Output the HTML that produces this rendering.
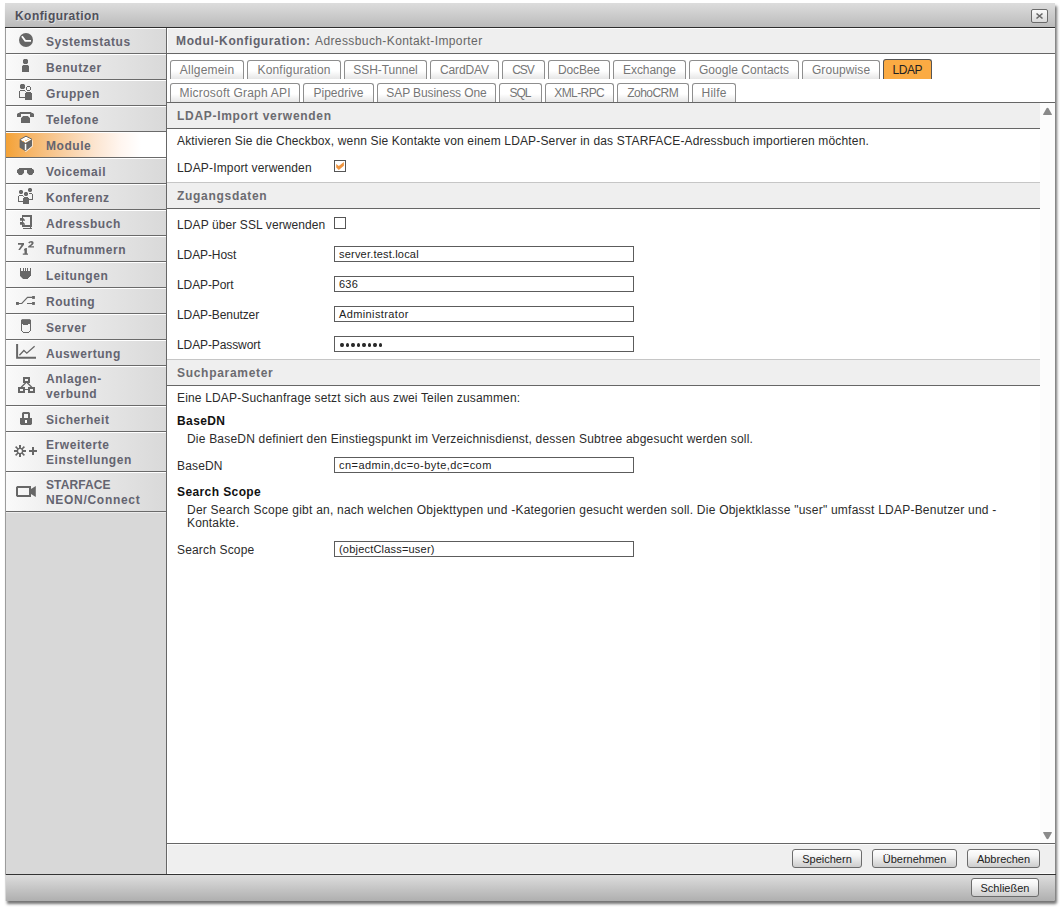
<!DOCTYPE html><html><head><meta charset="utf-8"><title>Konfiguration</title><style>
*{box-sizing:border-box}
html,body{margin:0;padding:0;background:#fff;width:1064px;height:910px;overflow:hidden;font-family:'Liberation Sans',sans-serif}
div{position:absolute}
.t{white-space:nowrap;line-height:20px}
.sb{font:bold 12px 'Liberation Sans',sans-serif;color:#646470;letter-spacing:.55px;line-height:20px}
.bd{font:12px 'Liberation Sans',sans-serif;color:#2b2b2b;letter-spacing:.16px;line-height:20px}
.sh{font:bold 12px 'Liberation Sans',sans-serif;color:#6b6b70;letter-spacing:.7px;line-height:20px}
.tb{height:19px;border:1px solid #8e8e8e;border-bottom:none;border-radius:3px 3px 0 0;background:linear-gradient(#fff 0,#fff 55%,#e6e6e6 100%)}
.tt{font:12px 'Liberation Sans',sans-serif;color:#767676;letter-spacing:.4px;text-align:center;line-height:20px;white-space:nowrap}
.in{height:16px;width:300px;border:1px solid #5c5c5c;background:#fff}
.it{font:11px 'Liberation Sans',sans-serif;color:#222;white-space:nowrap;line-height:20px;letter-spacing:.2px}
.bt{height:19px;border:1px solid #6c6c6c;border-radius:3px;background:linear-gradient(#fefefe,#f4f4f4 35%,#cdcdcd)}
.btt{font:11px 'Liberation Sans',sans-serif;color:#222;white-space:nowrap;line-height:20px;text-align:center}
</style></head><body>
<div style="left:5px;top:3px;width:1050px;height:898px;background:#d8d8d8;box-shadow:2px 3px 3px rgba(0,0,0,.55);border-radius:1px 1px 2px 0"></div>
<div style="left:5px;top:3px;width:1050px;height:24px;background:linear-gradient(#dddddd,#bbbbbb)"></div>
<div style="left:5px;top:27px;width:1050px;height:1px;background:#2e2e2e"></div>
<div class="t" style="left:15px;top:6px;font:bold 12px 'Liberation Sans',sans-serif;line-height:20px;color:#50505a;letter-spacing:.45px;text-shadow:1px 1px 0 rgba(255,255,255,.45)">Konfiguration</div>
<div style="left:1031px;top:9px;width:17px;height:14px;border:1px solid #6a6a6a;border-radius:2px;background:linear-gradient(#fbfbfb,#d9d9d9)"></div>
<div style="left:5px;top:28px;width:1px;height:847px;background:#9c9c9c"></div>

<div style="left:6px;top:28px;width:160px;height:847px;background:#d8d8d8"></div>
<div style="left:166px;top:28px;width:1px;height:847px;background:#666"></div>
<div style="left:6px;top:28px;width:160px;height:26px;background:linear-gradient(90deg,#fafafa,#f0f0f0 40px,#d9d9d9);border-top:1px solid #fff;border-bottom:1px solid #6a6a6a"></div>
<div class="t sb" style="left:46px;top:32px">Systemstatus</div>
<div style="left:6px;top:54px;width:160px;height:26px;background:linear-gradient(90deg,#fafafa,#f0f0f0 40px,#d9d9d9);border-top:1px solid #fff;border-bottom:1px solid #6a6a6a"></div>
<div class="t sb" style="left:46px;top:58px">Benutzer</div>
<div style="left:6px;top:80px;width:160px;height:26px;background:linear-gradient(90deg,#fafafa,#f0f0f0 40px,#d9d9d9);border-top:1px solid #fff;border-bottom:1px solid #6a6a6a"></div>
<div class="t sb" style="left:46px;top:84px">Gruppen</div>
<div style="left:6px;top:106px;width:160px;height:26px;background:linear-gradient(90deg,#fafafa,#f0f0f0 40px,#d9d9d9);border-top:1px solid #fff;border-bottom:1px solid #6a6a6a"></div>
<div class="t sb" style="left:46px;top:110px">Telefone</div>
<div style="left:6px;top:132px;width:160px;height:26px;background:linear-gradient(90deg,#f4a236 0,#f6b66a 25px,#f8cc9c 55px,#fce6d2 90px,#fff6f0 115px,#fff 135px);border-top:1px solid #fff;border-bottom:1px solid #6a6a6a"></div>
<div class="t sb" style="left:46px;top:136px">Module</div>
<div style="left:6px;top:158px;width:160px;height:26px;background:linear-gradient(90deg,#fafafa,#f0f0f0 40px,#d9d9d9);border-top:1px solid #fff;border-bottom:1px solid #6a6a6a"></div>
<div class="t sb" style="left:46px;top:162px">Voicemail</div>
<div style="left:6px;top:184px;width:160px;height:26px;background:linear-gradient(90deg,#fafafa,#f0f0f0 40px,#d9d9d9);border-top:1px solid #fff;border-bottom:1px solid #6a6a6a"></div>
<div class="t sb" style="left:46px;top:188px">Konferenz</div>
<div style="left:6px;top:210px;width:160px;height:26px;background:linear-gradient(90deg,#fafafa,#f0f0f0 40px,#d9d9d9);border-top:1px solid #fff;border-bottom:1px solid #6a6a6a"></div>
<div class="t sb" style="left:46px;top:214px">Adressbuch</div>
<div style="left:6px;top:236px;width:160px;height:26px;background:linear-gradient(90deg,#fafafa,#f0f0f0 40px,#d9d9d9);border-top:1px solid #fff;border-bottom:1px solid #6a6a6a"></div>
<div class="t sb" style="left:46px;top:240px">Rufnummern</div>
<div style="left:6px;top:262px;width:160px;height:26px;background:linear-gradient(90deg,#fafafa,#f0f0f0 40px,#d9d9d9);border-top:1px solid #fff;border-bottom:1px solid #6a6a6a"></div>
<div class="t sb" style="left:46px;top:266px">Leitungen</div>
<div style="left:6px;top:288px;width:160px;height:26px;background:linear-gradient(90deg,#fafafa,#f0f0f0 40px,#d9d9d9);border-top:1px solid #fff;border-bottom:1px solid #6a6a6a"></div>
<div class="t sb" style="left:46px;top:292px">Routing</div>
<div style="left:6px;top:314px;width:160px;height:26px;background:linear-gradient(90deg,#fafafa,#f0f0f0 40px,#d9d9d9);border-top:1px solid #fff;border-bottom:1px solid #6a6a6a"></div>
<div class="t sb" style="left:46px;top:318px">Server</div>
<div style="left:6px;top:340px;width:160px;height:26px;background:linear-gradient(90deg,#fafafa,#f0f0f0 40px,#d9d9d9);border-top:1px solid #fff;border-bottom:1px solid #6a6a6a"></div>
<div class="t sb" style="left:46px;top:344px">Auswertung</div>
<div style="left:6px;top:366px;width:160px;height:40px;background:linear-gradient(90deg,#fafafa,#f0f0f0 40px,#d9d9d9);border-top:1px solid #fff;border-bottom:1px solid #6a6a6a"></div>
<div class="sb" style="left:46px;top:372px;line-height:15px;white-space:nowrap">Anlagen-<br>verbund</div>
<div style="left:6px;top:406px;width:160px;height:26px;background:linear-gradient(90deg,#fafafa,#f0f0f0 40px,#d9d9d9);border-top:1px solid #fff;border-bottom:1px solid #6a6a6a"></div>
<div class="t sb" style="left:46px;top:410px">Sicherheit</div>
<div style="left:6px;top:432px;width:160px;height:40px;background:linear-gradient(90deg,#fafafa,#f0f0f0 40px,#d9d9d9);border-top:1px solid #fff;border-bottom:1px solid #6a6a6a"></div>
<div class="sb" style="left:46px;top:438px;line-height:15px;white-space:nowrap">Erweiterte<br>Einstellungen</div>
<div style="left:6px;top:472px;width:160px;height:40px;background:linear-gradient(90deg,#fafafa,#f0f0f0 40px,#d9d9d9);border-top:1px solid #fff;border-bottom:1px solid #6a6a6a"></div>
<div class="sb" style="left:46px;top:478px;line-height:15px;white-space:nowrap"><span style='letter-spacing:.1px'>STARFACE</span><br><span style='letter-spacing:.7px'>NEON/Connect</span></div>
<div style="left:6px;top:512px;width:160px;height:1px;background:#ececec"></div>
<div style="left:167px;top:28px;width:888px;height:25px;background:#efefef;border-top:1px solid #fff;border-left:1px solid #fff"></div>
<div style="left:167px;top:53px;width:888px;height:1px;background:#666"></div>
<div class="t" style="left:176px;top:31px;font:bold 12px 'Liberation Sans',sans-serif;line-height:20px;color:#63636d;letter-spacing:.63px">Modul-Konfiguration:</div>
<div class="t" style="left:315px;top:31px;font:12px 'Liberation Sans',sans-serif;line-height:20px;color:#666;letter-spacing:.4px">Adressbuch-Kontakt-Importer</div>
<div style="left:167px;top:54px;width:888px;height:48px;background:#fff"></div>
<div style="left:167px;top:102px;width:888px;height:1px;background:#666"></div>
<div class="tb" style="left:170px;top:60px;width:74px"></div>
<div class="tt" style="left:170px;top:60px;width:74px;letter-spacing:0.2px;text-indent:0.2px">Allgemein</div>
<div class="tb" style="left:247px;top:60px;width:94px"></div>
<div class="tt" style="left:247px;top:60px;width:94px;letter-spacing:0.2px;text-indent:0.2px">Konfiguration</div>
<div class="tb" style="left:344px;top:60px;width:83px"></div>
<div class="tt" style="left:344px;top:60px;width:83px;letter-spacing:-0.05px;text-indent:-0.05px">SSH-Tunnel</div>
<div class="tb" style="left:430px;top:60px;width:69px"></div>
<div class="tt" style="left:430px;top:60px;width:69px;letter-spacing:-0.15px;text-indent:-0.15px">CardDAV</div>
<div class="tb" style="left:502px;top:60px;width:43px"></div>
<div class="tt" style="left:502px;top:60px;width:43px;letter-spacing:-1.0px;text-indent:-1.0px">CSV</div>
<div class="tb" style="left:548px;top:60px;width:62px"></div>
<div class="tt" style="left:548px;top:60px;width:62px;letter-spacing:-0.15px;text-indent:-0.15px">DocBee</div>
<div class="tb" style="left:613px;top:60px;width:73px"></div>
<div class="tt" style="left:613px;top:60px;width:73px;letter-spacing:-0.05px;text-indent:-0.05px">Exchange</div>
<div class="tb" style="left:689px;top:60px;width:110px"></div>
<div class="tt" style="left:689px;top:60px;width:110px;letter-spacing:0.05px;text-indent:0.05px">Google Contacts</div>
<div class="tb" style="left:802px;top:60px;width:78px"></div>
<div class="tt" style="left:802px;top:60px;width:78px;letter-spacing:0.1px;text-indent:0.1px">Groupwise</div>
<div style="left:883px;top:59px;width:49px;height:20px;border:1px solid #555;border-bottom:none;border-radius:3px 3px 0 0;background:#fbab43"></div>
<div class="tt" style="left:883px;top:60px;width:49px;color:#222;letter-spacing:-0.4px;text-indent:-0.4px">LDAP</div>
<div class="tb" style="left:170px;top:83px;width:130px"></div>
<div class="tt" style="left:170px;top:83px;width:130px;letter-spacing:0.2px;text-indent:0.2px">Microsoft Graph API</div>
<div class="tb" style="left:303px;top:83px;width:71px"></div>
<div class="tt" style="left:303px;top:83px;width:71px;letter-spacing:0px;text-indent:0px">Pipedrive</div>
<div class="tb" style="left:377px;top:83px;width:119px"></div>
<div class="tt" style="left:377px;top:83px;width:119px;letter-spacing:-0.1px;text-indent:-0.1px">SAP Business One</div>
<div class="tb" style="left:499px;top:83px;width:43px"></div>
<div class="tt" style="left:499px;top:83px;width:43px;letter-spacing:-1.1px;text-indent:-1.1px">SQL</div>
<div class="tb" style="left:545px;top:83px;width:69px"></div>
<div class="tt" style="left:545px;top:83px;width:69px;letter-spacing:-0.6px;text-indent:-0.6px">XML-RPC</div>
<div class="tb" style="left:617px;top:83px;width:72px"></div>
<div class="tt" style="left:617px;top:83px;width:72px;letter-spacing:-0.55px;text-indent:-0.55px">ZohoCRM</div>
<div class="tb" style="left:692px;top:83px;width:44px"></div>
<div class="tt" style="left:692px;top:83px;width:44px;letter-spacing:0.2px;text-indent:0.2px">Hilfe</div>
<div style="left:167px;top:103px;width:888px;height:740px;background:#fff"></div>
<div style="left:1040px;top:103px;width:15px;height:740px;background:#fcfcfc"></div>
<div style="left:167px;top:103px;width:873px;height:25px;background:#efefef"></div>
<div style="left:167px;top:128px;width:873px;height:1px;background:#666"></div>
<div class="t sh" style="left:177px;top:106px">LDAP-Import verwenden</div>
<div style="left:167px;top:182px;width:873px;height:1px;background:#c6c6c6"></div>
<div style="left:167px;top:183px;width:873px;height:25px;background:#efefef"></div>
<div style="left:167px;top:208px;width:873px;height:1px;background:#666"></div>
<div class="t sh" style="left:177px;top:186px">Zugangsdaten</div>
<div style="left:167px;top:359px;width:873px;height:1px;background:#c6c6c6"></div>
<div style="left:167px;top:360px;width:873px;height:25px;background:#efefef"></div>
<div style="left:167px;top:385px;width:873px;height:1px;background:#666"></div>
<div class="t sh" style="left:177px;top:363px">Suchparameter</div>
<div class="t bd" style="left:177px;top:131px;">Aktivieren Sie die Checkbox, wenn Sie Kontakte von einem LDAP-Server in das STARFACE-Adressbuch importieren möchten.</div>
<div class="t bd" style="left:177px;top:158px;">LDAP-Import verwenden</div>
<div class="t bd" style="left:177px;top:215px;letter-spacing:.1px">LDAP über SSL verwenden</div>
<div class="t bd" style="left:177px;top:245px;letter-spacing:-.1px">LDAP-Host</div>
<div class="t bd" style="left:177px;top:275px;letter-spacing:-.1px">LDAP-Port</div>
<div class="t bd" style="left:177px;top:305px;letter-spacing:-.1px">LDAP-Benutzer</div>
<div class="t bd" style="left:177px;top:335px;letter-spacing:-.1px">LDAP-Passwort</div>
<div class="t bd" style="left:177px;top:388px;">Eine LDAP-Suchanfrage setzt sich aus zwei Teilen zusammen:</div>
<div class="t bd" style="left:177px;top:411px;font-weight:bold;color:#111;letter-spacing:.4px">BaseDN</div>
<div class="t bd" style="left:187px;top:429px;letter-spacing:.2px">Die BaseDN definiert den Einstiegspunkt im Verzeichnisdienst, dessen Subtree abgesucht werden soll.</div>
<div class="t bd" style="left:177px;top:456px;">BaseDN</div>
<div class="t bd" style="left:177px;top:482px;font-weight:bold;color:#111;letter-spacing:.4px">Search Scope</div>
<div class="t bd" style="left:187px;top:500px;letter-spacing:.23px">Der Search Scope gibt an, nach welchen Objekttypen und -Kategorien gesucht werden soll. Die Objektklasse "user" umfasst LDAP-Benutzer und -</div>
<div class="t bd" style="left:187px;top:513px;">Kontakte.</div>
<div class="t bd" style="left:177px;top:540px;">Search Scope</div>
<div style="left:334px;top:160px;width:12px;height:12px;border:1px solid #555;background:#fff"></div>
<div style="left:334px;top:217px;width:12px;height:12px;border:1px solid #555;background:#fff"></div>
<div class="in" style="left:334px;top:246px"></div>
<div class="it" style="left:339px;top:244px">server.test.local</div>
<div class="in" style="left:334px;top:276px"></div>
<div class="it" style="left:339px;top:274px">636</div>
<div class="in" style="left:334px;top:306px"></div>
<div class="it" style="left:339px;top:304px;letter-spacing:0.38px">Administrator</div>
<div class="in" style="left:334px;top:336px"></div>
<div class="in" style="left:334px;top:457px"></div>
<div class="it" style="left:339px;top:455px;letter-spacing:0.45px">cn=admin,dc=o-byte,dc=com</div>
<div class="in" style="left:334px;top:541px"></div>
<div class="it" style="left:339px;top:539px">(objectClass=user)</div>
<div style="left:340.00px;top:342.5px;width:3.6px;height:4.4px;border-radius:50%;background:#2a2a2a"></div>
<div style="left:345.50px;top:342.5px;width:3.6px;height:4.4px;border-radius:50%;background:#2a2a2a"></div>
<div style="left:351.00px;top:342.5px;width:3.6px;height:4.4px;border-radius:50%;background:#2a2a2a"></div>
<div style="left:356.50px;top:342.5px;width:3.6px;height:4.4px;border-radius:50%;background:#2a2a2a"></div>
<div style="left:362.00px;top:342.5px;width:3.6px;height:4.4px;border-radius:50%;background:#2a2a2a"></div>
<div style="left:367.50px;top:342.5px;width:3.6px;height:4.4px;border-radius:50%;background:#2a2a2a"></div>
<div style="left:373.00px;top:342.5px;width:3.6px;height:4.4px;border-radius:50%;background:#2a2a2a"></div>
<div style="left:378.50px;top:342.5px;width:3.6px;height:4.4px;border-radius:50%;background:#2a2a2a"></div>
<div style="left:167px;top:843px;width:888px;height:1px;background:#666"></div>
<div style="left:167px;top:844px;width:888px;height:30px;background:#efefef;border-top:1px solid #fafafa;border-left:1px solid #fafafa;border-bottom:1px solid #fafafa"></div>
<div style="left:6px;top:874px;width:1050px;height:1px;background:#333"></div>
<div class="bt" style="left:792px;top:849px;width:70px"></div>
<div class="btt" style="left:792px;top:849px;width:70px">Speichern</div>
<div class="bt" style="left:872px;top:849px;width:85px"></div>
<div class="btt" style="left:872px;top:849px;width:85px">Übernehmen</div>
<div class="bt" style="left:967px;top:849px;width:73px"></div>
<div class="btt" style="left:967px;top:849px;width:73px">Abbrechen</div>
<div style="left:6px;top:875px;width:1049px;height:26px;background:linear-gradient(#dddddd,#afafaf);border-radius:0 0 2px 0"></div>
<div class="bt" style="left:971px;top:878px;width:68px"></div>
<div class="btt" style="left:971px;top:878px;width:68px">Schließen</div>
<svg style="position:absolute;left:0;top:0" width="1064" height="910" viewBox="0 0 1064 910"><path d="M1036.5 13.5 L1042.5 18.5 M1042.5 13.5 L1036.5 18.5" stroke="#676767" stroke-width="1.6" fill="none"/><path d="M1043 114.6 Q1043 115 1043.6 115 L1051.4 115 Q1052 115 1052 114.6 L1048.6 108.4 Q1047.5 107.3 1046.4 108.4 Z" fill="#8a8a8a"/><path d="M1043 832.4 Q1043 832 1043.6 832 L1051.4 832 Q1052 832 1052 832.4 L1048.6 838.6 Q1047.5 839.7 1046.4 838.6 Z" fill="#8a8a8a"/><path d="M336.2 164.1 L336.2 167.4 L338.8 169.9 L343.9 165.7 L343.9 162 L338.8 166.1 Z" fill="#ef9540"/><circle cx="26" cy="40" r="7" fill="#676767"/><path d="M21.9 36.2 L25.3 40.9 L31 40.9" stroke="#fff" stroke-width="1.8" fill="none"/><rect x="24" y="59" width="3" height="5" fill="#676767"/><rect x="23" y="60" width="5" height="3" fill="#676767"/><rect x="23" y="59" width="1" height="1" fill="#676767" fill-opacity="0.4"/><rect x="27" y="59" width="1" height="1" fill="#676767" fill-opacity="0.4"/><rect x="23" y="63" width="1" height="1" fill="#676767" fill-opacity="0.4"/><rect x="27" y="63" width="1" height="1" fill="#676767" fill-opacity="0.4"/><rect x="23" y="65" width="5" height="1" fill="#676767"/><rect x="22" y="66" width="7" height="6" fill="#676767"/><rect x="22" y="65" width="1" height="1" fill="#676767" fill-opacity="0.3"/><rect x="28" y="65" width="1" height="1" fill="#676767" fill-opacity="0.3"/><rect x="21" y="84" width="3" height="5" fill="#676767"/><rect x="20" y="85" width="5" height="3" fill="#676767"/><rect x="20" y="84" width="1" height="1" fill="#676767" fill-opacity="0.4"/><rect x="24" y="84" width="1" height="1" fill="#676767" fill-opacity="0.4"/><rect x="20" y="88" width="1" height="1" fill="#676767" fill-opacity="0.4"/><rect x="24" y="88" width="1" height="1" fill="#676767" fill-opacity="0.4"/><rect x="27" y="86" width="3" height="1" fill="#676767"/><rect x="27" y="90" width="3" height="1" fill="#676767"/><rect x="26" y="87" width="1" height="3" fill="#676767"/><rect x="30" y="87" width="1" height="3" fill="#676767"/><rect x="20" y="90" width="5" height="1" fill="#676767"/><rect x="19" y="91" width="1" height="6" fill="#676767"/><rect x="19" y="97" width="6" height="1" fill="#676767"/><rect x="25" y="91" width="1" height="1" fill="#676767" fill-opacity="0.6"/><rect x="26" y="92" width="5" height="1" fill="#676767"/><rect x="25" y="93" width="7" height="7" fill="#676767"/><rect x="20" y="112" width="11" height="1" fill="#676767"/><rect x="18" y="113" width="15" height="1" fill="#676767"/><rect x="19" y="112" width="1" height="1" fill="#676767" fill-opacity="0.4"/><rect x="31" y="112" width="1" height="1" fill="#676767" fill-opacity="0.4"/><rect x="17" y="114" width="4" height="3" fill="#676767"/><rect x="30" y="114" width="4" height="3" fill="#676767"/><rect x="17" y="113" width="1" height="1" fill="#676767" fill-opacity="0.4"/><rect x="33" y="113" width="1" height="1" fill="#676767" fill-opacity="0.4"/><rect x="23" y="116" width="5" height="1" fill="#676767"/><rect x="22" y="117" width="7" height="1" fill="#676767"/><rect x="21" y="118" width="9" height="5" fill="#676767"/><rect x="22" y="116" width="1" height="1" fill="#676767" fill-opacity="0.35"/><rect x="28" y="116" width="1" height="1" fill="#676767" fill-opacity="0.35"/><rect x="21" y="117" width="1" height="1" fill="#676767" fill-opacity="0.35"/><rect x="29" y="117" width="1" height="1" fill="#676767" fill-opacity="0.35"/><path d="M32.6 139.8 L32.6 146.4 L25.8 151.9 L25 151.2 Z" fill="#fff"/><path d="M20 139.5 L26 136.2 L32 139.3 L25.5 143 Z" fill="#fff"/><path d="M20 139.5 L26 136.2 L32 139.3" stroke="#676767" stroke-width="1" fill="none"/><path d="M19.6 139.3 L25.5 143 L25.5 151.2 L19.6 147.6 Z" fill="#676767"/><path d="M25.5 143 L32 139.3 L32 146.1 L25.5 151.2 Z" fill="#676767"/><rect x="24.8" y="144" width="1.5" height="6" fill="#fff"/><ellipse cx="23.4" cy="141.4" rx=".8" ry=".6" fill="#f5a540"/><ellipse cx="26" cy="140.3" rx=".9" ry=".5" fill="#f5a540"/><ellipse cx="28" cy="139.3" rx=".9" ry=".5" fill="#f5a540"/><rect x="19" y="168" width="13" height="2" fill="#676767"/><rect x="17" y="170" width="7" height="3" fill="#676767"/><rect x="18" y="169" width="6" height="1" fill="#676767"/><rect x="18" y="173" width="5" height="1" fill="#676767"/><rect x="19" y="174" width="3" height="1" fill="#676767"/><rect x="27" y="170" width="7" height="3" fill="#676767"/><rect x="27" y="169" width="6" height="1" fill="#676767"/><rect x="28" y="173" width="5" height="1" fill="#676767"/><rect x="29" y="174" width="3" height="1" fill="#676767"/><rect x="17" y="169" width="1" height="1" fill="#676767" fill-opacity="0.35"/><rect x="33" y="169" width="1" height="1" fill="#676767" fill-opacity="0.35"/><rect x="23" y="173" width="1" height="1" fill="#676767" fill-opacity="0.35"/><rect x="27" y="173" width="1" height="1" fill="#676767" fill-opacity="0.35"/><rect x="18" y="174" width="1" height="1" fill="#676767" fill-opacity="0.35"/><rect x="22" y="174" width="1" height="1" fill="#676767" fill-opacity="0.35"/><rect x="28" y="174" width="1" height="1" fill="#676767" fill-opacity="0.35"/><rect x="32" y="174" width="1" height="1" fill="#676767" fill-opacity="0.35"/><rect x="20" y="190" width="2" height="4" fill="#676767"/><rect x="19" y="191" width="4" height="2" fill="#676767"/><path d="M19 190 h1 v1 h-1 Z M22 190 h1 v1 h-1 Z M19 193 h1 v1 h-1 Z M22 193 h1 v1 h-1 Z" fill="#676767" fill-opacity=".45"/><rect x="25" y="192" width="2" height="4" fill="#676767"/><rect x="24" y="193" width="4" height="2" fill="#676767"/><path d="M24 192 h1 v1 h-1 Z M27 192 h1 v1 h-1 Z M24 195 h1 v1 h-1 Z M27 195 h1 v1 h-1 Z" fill="#676767" fill-opacity=".45"/><rect x="29" y="188" width="2" height="4" fill="#676767"/><rect x="28" y="189" width="4" height="2" fill="#676767"/><path d="M28 188 h1 v1 h-1 Z M31 188 h1 v1 h-1 Z M28 191 h1 v1 h-1 Z M31 191 h1 v1 h-1 Z" fill="#676767" fill-opacity=".45"/><rect x="19" y="195" width="4" height="1" fill="#676767"/><rect x="18" y="196" width="1" height="5" fill="#676767"/><rect x="18" y="201" width="5" height="1" fill="#676767"/><rect x="23" y="196" width="1" height="1" fill="#676767" fill-opacity=".7"/><rect x="24" y="197" width="4" height="1" fill="#676767"/><rect x="23" y="198" width="6" height="6" fill="#676767"/><rect x="29" y="193" width="3" height="1" fill="#676767"/><rect x="32" y="194" width="1" height="5" fill="#676767"/><rect x="29" y="199" width="4" height="1" fill="#676767"/><path d="M22 215 h10 v12 h-10 Z M23 217 h7 v8 h-7 Z" fill="#676767" fill-rule="evenodd"/><rect x="23" y="228" width="9" height="1" fill="#676767"/><rect x="30" y="227" width="1" height="1" fill="#676767"/><path d="M20 218 L23.2 218 L25 220 L25 220.7 L20 220.7 Z M20 222 L23.2 222 L25 224 L25 224.7 L20 224.7 Z" fill="#676767"/><path d="M18 243 L24 243 L24 244.7 L20 250 L18.3 250 L21.6 244.7 L18 244.7 Z" fill="#676767"/><path d="M24.3 248.8 L25.9 247.9 L26.9 247.9 L26.9 253.5 L28 253.5 L28 254.8 L22.8 254.8 L22.8 253.5 L24.5 253.5 L24.5 250.3 L23.7 250.6 Z" fill="#676767"/><path d="M28.2 242.6 Q29.3 241 31.2 241 Q33.7 241 33.7 243 Q33.7 244.4 30.8 246.2 L34 246.2 L34 247.6 L28.1 247.6 L28.1 246.5 Q31.6 244.2 31.6 243.1 Q31.6 242.4 30.9 242.4 Q30 242.4 29.3 243.4 Z" fill="#676767"/><rect x="20" y="268" width="1" height="3" fill="#676767"/><rect x="23" y="268" width="1" height="3" fill="#676767"/><rect x="25" y="268" width="1" height="3" fill="#676767"/><rect x="27" y="268" width="1" height="3" fill="#676767"/><rect x="30" y="268" width="1" height="3" fill="#676767"/><rect x="20" y="271" width="11" height="5" fill="#676767"/><rect x="21" y="276" width="9" height="1" fill="#676767"/><rect x="22" y="277" width="7" height="1" fill="#676767"/><rect x="23" y="278" width="5" height="1" fill="#676767"/><rect x="20" y="276" width="1" height="1" fill="#676767" fill-opacity="0.4"/><rect x="29" y="276" width="1" height="1" fill="#676767" fill-opacity="0.4"/><rect x="21" y="277" width="1" height="1" fill="#676767" fill-opacity="0.4"/><rect x="28" y="277" width="1" height="1" fill="#676767" fill-opacity="0.4"/><rect x="22" y="278" width="1" height="1" fill="#676767" fill-opacity="0.4"/><rect x="27" y="278" width="1" height="1" fill="#676767" fill-opacity="0.4"/><rect x="16" y="302" width="2.9" height="2.9" fill="#676767"/><rect x="32.1" y="296" width="2.8" height="2.9" fill="#676767"/><rect x="32.1" y="302" width="2.8" height="2.9" fill="#676767"/><path d="M18.5 303.5 L21.8 303.5 L27.5 297.4 L32.3 297.4 M27 303.5 L32.3 303.5" stroke="#676767" stroke-width="1.1" fill="none"/><rect x="22" y="319" width="8" height="1" fill="#676767" fill-opacity="0.85"/><rect x="21" y="320" width="10" height="4" fill="#676767"/><rect x="23" y="324" width="5" height="1" fill="#676767"/><rect x="21" y="319" width="1" height="1" fill="#676767" fill-opacity="0.3"/><rect x="30" y="319" width="1" height="1" fill="#676767" fill-opacity="0.3"/><rect x="21" y="324" width="1" height="7" fill="#676767"/><rect x="30" y="324" width="1" height="7" fill="#676767"/><rect x="22" y="331" width="1" height="1" fill="#676767"/><rect x="29" y="331" width="1" height="1" fill="#676767"/><rect x="23" y="332" width="6" height="1" fill="#676767"/><path d="M17.1 344 L17.1 357.8 L36 357.8" stroke="#676767" stroke-width="2" fill="none"/><path d="M19.4 355.3 L23.9 350.5 L26.8 353.2 L34.6 346.3" stroke="#676767" stroke-width="1.3" fill="none"/><path d="M23 377 h7 v6 h-7 Z M25 379 h3 v2 h-3 Z M18 387 h7 v6 h-7 Z M20 389 h3 v2 h-3 Z M28 387 h7 v6 h-7 Z M30 389 h3 v2 h-3 Z" fill="#676767" fill-rule="evenodd"/><rect x="25" y="389" width="3" height="1" fill="#676767"/><path d="M25.8 382.8 L21.2 387.2 M27.2 382.8 L31.8 387.2" stroke="#676767" stroke-width="1.3" fill="none"/><rect x="23" y="412" width="6" height="2" fill="#676767"/><rect x="22" y="413" width="2" height="5" fill="#676767"/><rect x="28" y="413" width="2" height="5" fill="#676767"/><rect x="22" y="412" width="1" height="1" fill="#676767" fill-opacity="0.4"/><rect x="29" y="412" width="1" height="1" fill="#676767" fill-opacity="0.4"/><rect x="20" y="418" width="12" height="6" fill="#676767"/><rect x="21" y="424" width="10" height="1" fill="#676767"/><rect x="20" y="424" width="1" height="1" fill="#676767" fill-opacity="0.4"/><rect x="31" y="424" width="1" height="1" fill="#676767" fill-opacity="0.4"/><rect x="25" y="420" width="2" height="3" fill="#fff"/><rect x="19" y="445" width="2" height="12" fill="#676767"/><rect x="14" y="450" width="12" height="2" fill="#676767"/><circle cx="20" cy="451" r="2.6" fill="#fff" stroke="#676767" stroke-width="1.4"/><path d="M15.6 446.6 L18 449 M24.4 446.6 L22 449 M15.6 455.4 L18 453 M24.4 455.4 L22 453" stroke="#676767" stroke-width="1.6" fill="none"/><rect x="32" y="447" width="2" height="8" fill="#676767"/><rect x="29" y="450" width="8" height="2" fill="#676767"/><rect x="17" y="486" width="14" height="2" fill="#676767"/><rect x="16" y="487" width="2" height="9" fill="#676767"/><rect x="17" y="495" width="14" height="2" fill="#676767"/><rect x="29" y="486" width="2" height="11" fill="#676767"/><rect x="16" y="486" width="1" height="1" fill="#676767" fill-opacity="0.3"/><rect x="16" y="496" width="1" height="1" fill="#676767" fill-opacity="0.3"/><path d="M31 489 L35.8 486 L35.8 497 L31 494 Z" fill="#676767"/></svg>
</body></html>
